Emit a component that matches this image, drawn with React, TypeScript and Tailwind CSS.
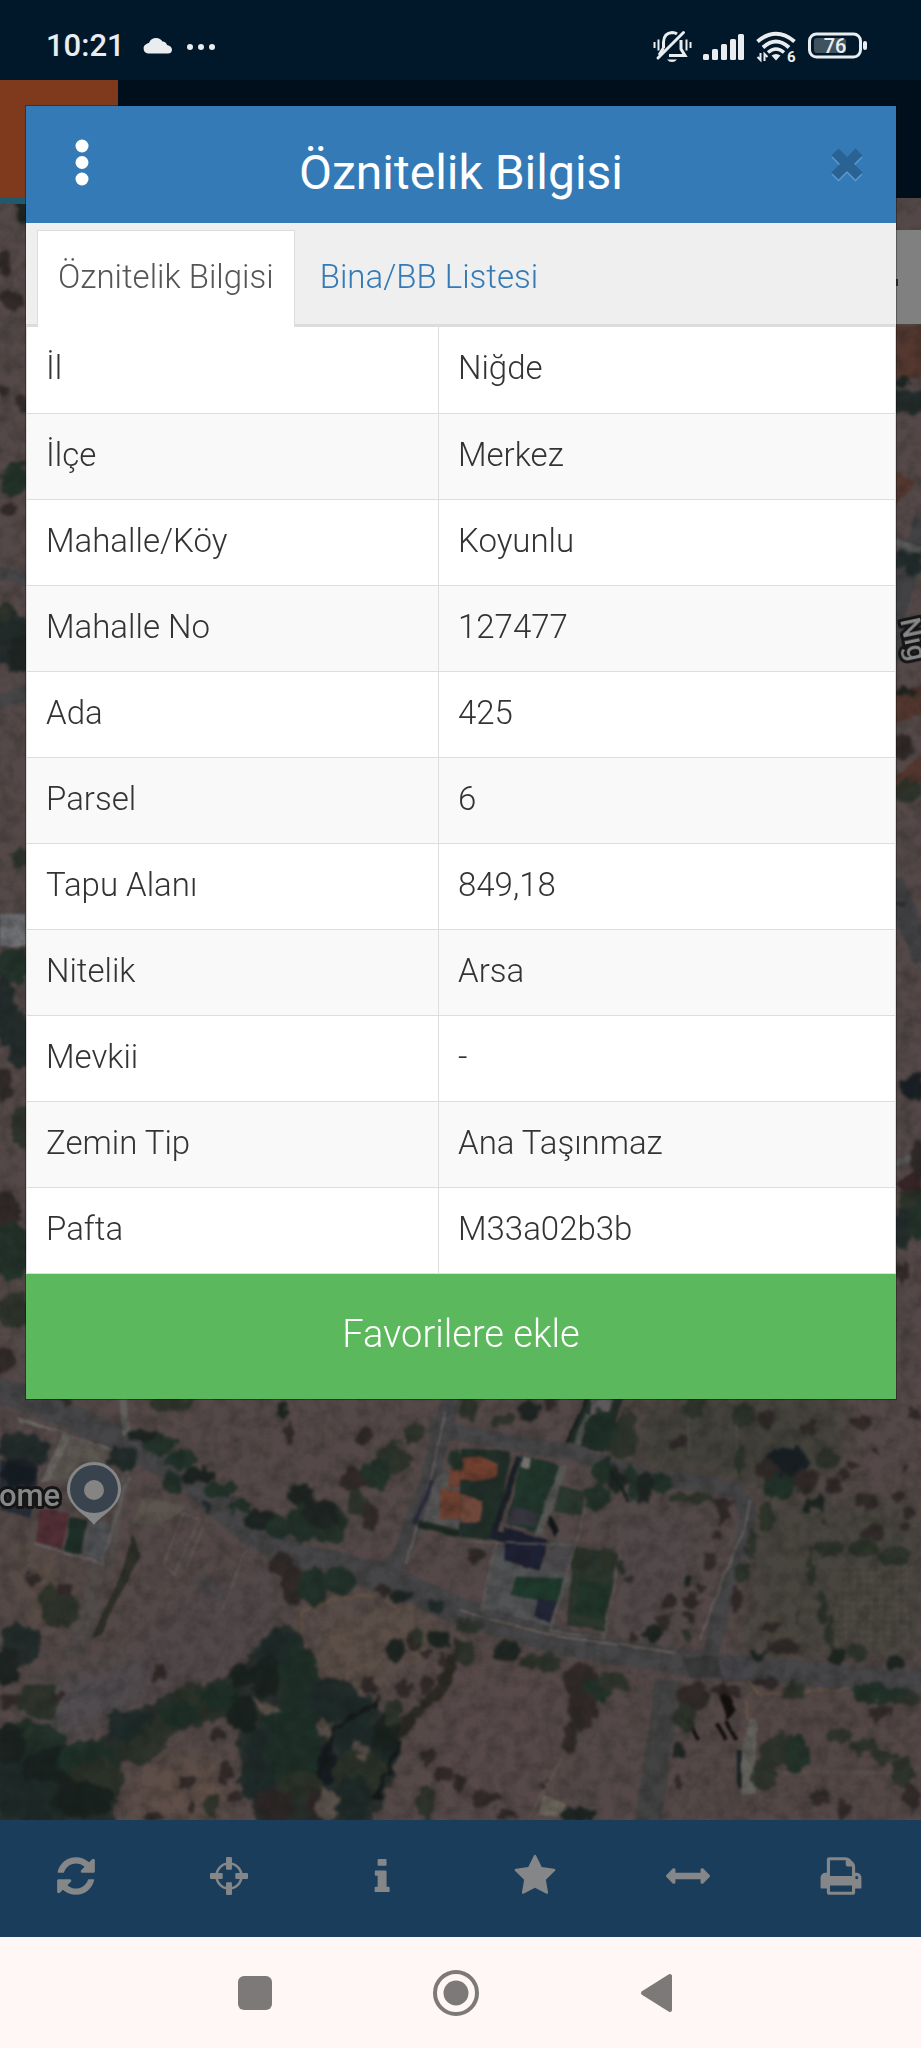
import { useState, type ReactNode } from 'react'

const attributes = [
  { label: 'İl',          value: 'Niğde'        },
  { label: 'İlçe',        value: 'Merkez'       },
  { label: 'Mahalle/Köy', value: 'Koyunlu'      },
  { label: 'Mahalle No',  value: '127477'       },
  { label: 'Ada',         value: '425'          },
  { label: 'Parsel',      value: '6'            },
  { label: 'Tapu Alanı',  value: '849,18'       },
  { label: 'Nitelik',     value: 'Arsa'         },
  { label: 'Mevkii',      value: '-'            },
  { label: 'Zemin Tip',   value: 'Ana Taşınmaz' },
  { label: 'Pafta',       value: 'M33a02b3b'    },
]

const tabs = ['Öznitelik Bilgisi', 'Bina/BB Listesi']

// Trees and shrubs: [x, y, rx, ry, tone]
type Tree = [number, number, number, number, number]
const tones = ['#19221e', '#1e3027', '#1e2a29', '#2e2726', '#2b3229', '#141c22']

const treesWest: Tree[] = [
  [510, 70, 65, 25, 4], [195, 62, 25, 15, 3], [850, 88, 16, 24, 0], [870, 165, 14, 36, 3],
  [1092, 165, 26, 28, 3], [1245, 160, 32, 28, 4], [1180, 235, 55, 45, 4], [1130, 285, 50, 42, 1],
  [1060, 300, 36, 40, 3], [1070, 370, 34, 40, 4], [1110, 410, 28, 40, 3], [900, 345, 40, 32, 0],
  [430, 165, 45, 22, 0], [480, 195, 50, 26, 1], [545, 240, 50, 25, 1], [600, 285, 50, 25, 0],
  [660, 330, 50, 24, 1], [720, 375, 40, 20, 1], [780, 415, 55, 28, 0], [840, 440, 45, 30, 1],
  [920, 430, 60, 60, 1], [985, 430, 55, 60, 1], [960, 400, 60, 40, 0], [370, 235, 42, 36, 2],
  [515, 310, 34, 34, 1], [70, 210, 75, 55, 2], [60, 280, 60, 40, 5], [845, 550, 36, 36, 3],
  [880, 620, 34, 60, 3], [940, 620, 45, 58, 1], [1010, 600, 55, 40, 1], [1150, 630, 26, 16, 3],
  [1200, 650, 30, 16, 0], [1310, 680, 24, 24, 2], [180, 690, 56, 55, 4], [150, 650, 30, 30, 4],
  [192, 632, 20, 22, 3], [60, 790, 60, 60, 2], [20, 860, 45, 55, 0], [100, 600, 18, 22, 3],
  [120, 960, 65, 55, 4], [30, 960, 28, 26, 3], [180, 955, 20, 18, 3], [475, 882, 26, 26, 3],
  [1185, 812, 28, 32, 0], [1248, 770, 25, 30, 4], [1318, 778, 30, 32, 0], [1275, 820, 12, 12, 3],
  [1240, 800, 22, 18, 3], [1330, 840, 18, 18, 3], [1210, 925, 26, 26, 3], [1278, 915, 20, 22, 3],
  [1110, 915, 26, 28, 3], [840, 830, 66, 80, 2], [800, 890, 45, 60, 0], [900, 870, 60, 75, 1],
  [725, 885, 36, 36, 0], [590, 960, 75, 55, 4], [540, 1000, 62, 40, 1], [660, 950, 60, 42, 1],
  [730, 1000, 42, 60, 0], [900, 950, 50, 60, 1], [1000, 960, 80, 62, 2], [1060, 990, 60, 50, 2],
  [870, 1040, 90, 70, 1], [800, 1100, 65, 60, 2], [880, 1130, 90, 80, 1], [770, 1200, 55, 60, 2],
  [900, 1220, 60, 50, 4], [820, 1280, 60, 50, 3], [1060, 1070, 60, 60, 2], [1110, 1110, 90, 80, 2],
  [1080, 1180, 80, 70, 4], [1060, 1260, 60, 70, 2], [1160, 1060, 36, 60, 0], [1180, 1000, 30, 40, 4],
  [980, 1150, 25, 60, 5], [940, 1270, 22, 50, 3], [400, 1040, 75, 50, 2], [350, 1020, 26, 30, 2],
  [470, 1060, 45, 40, 4], [420, 1110, 60, 40, 4], [655, 1065, 22, 22, 3], [675, 1180, 26, 28, 3],
  [560, 1208, 20, 20, 3], [710, 1252, 20, 20, 3], [630, 1275, 28, 30, 4], [575, 1280, 14, 18, 3],
  [80, 1100, 120, 75, 1], [40, 1170, 110, 80, 2], [160, 1180, 90, 80, 0], [260, 1140, 90, 60, 1],
  [290, 1200, 80, 60, 4], [100, 1260, 140, 60, 2], [250, 1260, 90, 55, 0], [30, 1090, 50, 60, 0],
  [1280, 1130, 26, 26, 3], [1330, 1180, 28, 20, 3], [1275, 1265, 32, 50, 4], [1370, 1210, 20, 24, 3],
  [460, 1312, 26, 10, 3], [1370, 240, 22, 30, 1], [620, 382, 10, 13, 2],
]

const treesEast: Tree[] = [
  [25, 85, 28, 35, 4], [205, 90, 30, 32, 0], [130, 118, 34, 20, 4], [270, 72, 22, 22, 3],
  [425, 150, 48, 60, 1], [500, 150, 30, 60, 4], [490, 200, 40, 40, 4], [655, 190, 22, 18, 3],
  [700, 80, 34, 30, 4], [850, 110, 34, 36, 4], [915, 120, 26, 30, 3], [430, 270, 34, 40, 1],
  [470, 300, 26, 38, 0], [415, 350, 40, 40, 1], [520, 310, 26, 50, 1], [555, 320, 22, 50, 0],
  [600, 310, 26, 36, 1], [700, 355, 75, 18, 4], [790, 370, 28, 20, 3], [920, 410, 28, 42, 4],
  [980, 250, 65, 50, 5], [920, 270, 36, 30, 3], [960, 320, 55, 36, 1], [1040, 300, 34, 36, 3],
  [1045, 145, 26, 24, 3], [1100, 235, 32, 38, 4], [1180, 255, 18, 16, 3], [1123, 318, 22, 24, 3],
  [1202, 126, 28, 24, 3], [1218, 364, 32, 28, 3], [1078, 372, 24, 22, 0], [1045, 375, 12, 18, 0],
  [1312, 348, 18, 18, 3], [1345, 400, 18, 18, 3], [1335, 435, 14, 14, 3], [1230, 460, 40, 24, 3],
  [1110, 505, 44, 24, 4], [1210, 505, 45, 28, 4], [1300, 530, 50, 30, 4], [1150, 280, 14, 16, 3],
  [1360, 105, 22, 18, 3], [1335, 262, 10, 12, 3], [1250, 215, 10, 10, 3], [1095, 425, 10, 10, 3],
  [50, 525, 24, 26, 3], [785, 400, 18, 30, 3], [770, 465, 14, 22, 3], [752, 545, 18, 32, 3],
  [875, 490, 18, 40, 4], [845, 580, 22, 30, 4], [830, 660, 18, 45, 3], [688, 600, 16, 14, 0],
  [722, 625, 16, 20, 3], [628, 660, 24, 24, 3], [690, 665, 22, 22, 3], [685, 708, 14, 14, 3],
  [610, 725, 22, 24, 3], [578, 762, 28, 24, 0], [524, 770, 18, 16, 3], [680, 770, 20, 18, 4],
  [512, 600, 10, 14, 3], [445, 535, 28, 34, 4], [365, 540, 30, 30, 4], [480, 560, 14, 20, 4],
  [30, 740, 50, 20, 4], [15, 820, 26, 40, 4], [140, 815, 38, 32, 0], [245, 845, 65, 24, 4],
  [360, 900, 55, 50, 3], [405, 930, 45, 40, 1], [370, 990, 45, 55, 3], [460, 905, 48, 30, 4],
  [330, 1070, 22, 45, 3], [700, 950, 50, 45, 3], [670, 1010, 30, 50, 4], [800, 930, 45, 24, 3],
  [655, 1105, 22, 28, 0], [655, 1205, 15, 22, 3], [1000, 930, 34, 30, 4], [910, 910, 45, 16, 3],
  [1220, 935, 52, 30, 1], [1310, 950, 60, 26, 1], [1260, 1000, 34, 28, 3], [1350, 955, 34, 22, 4],
  [970, 805, 55, 20, 3], [895, 825, 20, 12, 0], [1130, 825, 26, 22, 0], [1190, 820, 32, 28, 4],
  [1305, 850, 34, 20, 0], [935, 740, 26, 18, 3], [1010, 705, 9, 18, 3], [960, 1110, 60, 50, 4],
  [1010, 1120, 40, 60, 1], [915, 1180, 35, 60, 4], [1140, 1065, 40, 26, 4], [1210, 1100, 45, 22, 4],
  [1270, 1130, 45, 24, 4], [1330, 1180, 30, 45, 4], [1350, 1250, 24, 40, 3], [1080, 1255, 26, 24, 3],
  [1147, 1290, 20, 28, 3], [75, 1258, 44, 24, 3], [8, 1205, 14, 16, 3], [248, 1218, 16, 15, 3],
  [350, 1305, 60, 22, 0], [140, 1305, 28, 16, 3], [840, 240, 14, 50, 4], [1055, 560, 12, 60, 4],
  [1085, 680, 14, 50, 4], [1110, 760, 14, 50, 4],
]

const treesEdges: Tree[] = [
  [24, 210, 8, 14, 0], [4, 262, 6, 12, 3], [12, 300, 12, 9, 3], [4, 390, 6, 8, 3], [23, 404, 6, 9, 3],
  [14, 480, 14, 17, 1], [8, 511, 8, 6, 3], [12, 640, 18, 30, 2], [22, 655, 14, 18, 0], [4, 612, 9, 10, 4],
  [19, 858, 10, 9, 4], [14, 966, 18, 16, 1], [4, 1010, 12, 34, 2], [20, 1040, 12, 30, 2],
  [4, 1085, 8, 18, 3], [21, 1125, 9, 22, 4], [7, 1210, 14, 20, 3], [12, 1252, 18, 30, 1],
  [14, 1310, 16, 18, 4], [4, 1360, 12, 12, 3], [909, 402, 18, 12, 2], [903, 382, 8, 5, 0],
  [902, 560, 8, 8, 2], [914, 564, 10, 12, 2], [902, 693, 14, 4, 0], [908, 792, 14, 12, 4],
  [902, 748, 10, 14, 3], [899, 905, 6, 4, 3], [915, 1088, 14, 12, 5], [918, 1215, 14, 26, 1],
  [902, 1230, 8, 22, 2], [902, 1272, 8, 8, 3], [918, 1160, 8, 20, 3], [910, 1200, 10, 8, 4],
]

function Trees({ items }: { items: Tree[] }) {
  return (
    <g opacity="0.9">
      {items.map(([x, y, rx, ry, tone], i) => (
        <ellipse key={i} cx={x} cy={y} rx={rx} ry={ry} fill={tones[tone]} />
      ))}
    </g>
  )
}

function SatelliteMap() {
  return (
    <svg
      className="absolute inset-0 w-full h-full"
      viewBox="0 198 921 1622"
      preserveAspectRatio="xMidYMid slice"
      role="img"
      aria-label="Uydu haritası"
    >
      <defs>
        <filter id="ragged" x="-5%" y="-5%" width="110%" height="110%" colorInterpolationFilters="sRGB">
          <feTurbulence type="fractalNoise" baseFrequency="0.09" numOctaves="3" seed="4" result="n" />
          <feDisplacementMap in="SourceGraphic" in2="n" scale="14" xChannelSelector="R" yChannelSelector="G" />
          <feGaussianBlur stdDeviation="1.8" />
        </filter>
        <filter id="soft" x="-5%" y="-5%" width="110%" height="110%" colorInterpolationFilters="sRGB">
          <feTurbulence type="fractalNoise" baseFrequency="0.05" numOctaves="2" seed="9" result="n" />
          <feDisplacementMap in="SourceGraphic" in2="n" scale="4" xChannelSelector="R" yChannelSelector="G" />
          <feGaussianBlur stdDeviation="1.2" />
        </filter>
        <filter id="haze" x="-20%" y="-20%" width="140%" height="140%" colorInterpolationFilters="sRGB">
          <feGaussianBlur stdDeviation="12" />
        </filter>
        <filter id="grain" x="0" y="0" width="100%" height="100%" colorInterpolationFilters="sRGB">
          <feTurbulence type="fractalNoise" baseFrequency="0.07" numOctaves="4" seed="2" />
          <feColorMatrix values="0 0 0 0 0.08  0 0 0 0 0.09  0 0 0 0 0.08  1.6 0 0 0 -0.6" />
        </filter>
        <pattern id="rows" width="26" height="22" patternUnits="userSpaceOnUse">
          <path d="M0 11H20M13 0V16" stroke="#716a5c" strokeWidth="3" opacity="0.35" />
        </pattern>
      </defs>

      <rect y="198" width="921" height="1622" fill="#544948" />

      {/* Ground tones */}
      <g filter="url(#haze)">
        <path d="M635 1400H840V1470L810 1480H740L640 1470V1400Z" fill="#42413a" />
        <path d="M755 1500H921V1660H745Z" fill="#48453e" />
        <path d="M180 1600L280 1560L270 1650L200 1690H110Z" fill="#52484a" />
        <path d="M310 1610L420 1600L440 1650L370 1690H320Z" fill="#5c4f48" />
        <path d="M140 1760H230V1820H120Z" fill="#5f4f48" />
        <path d="M440 1660H560V1820H410Z" fill="#574949" />
        <path d="M0 1530L60 1560L90 1640L30 1620Z" fill="#5a4d46" />
        <path d="M600 1500L700 1510L680 1640H610Z" fill="#53494a" />
        <path d="M20 1690L150 1660L140 1700L60 1740Z" fill="#504c50" />
        <path d="M740 1690H921V1820H690Z" fill="#544847" />
      </g>

      {/* Roads */}
      <g filter="url(#soft)" fill="none" stroke="#464547" strokeLinejoin="round">
        <path d="M-10 1386L60 1412L127 1443L187 1477L250 1533L300 1557L383 1577L460 1611L560 1642L693 1664L921 1684" strokeWidth="26" />
        <path d="M386 1576L404 1550L428 1484L440 1438L452 1396" strokeWidth="18" />
        <path d="M428 1425L460 1433L577 1454L650 1479L700 1483L735 1490L748 1510L742 1550L720 1613L710 1660" strokeWidth="16" />
        <path d="M667 1680L660 1740L647 1825" strokeWidth="26" stroke="#444343" />
        <path d="M107 1570L120 1500L134 1450" strokeWidth="10" stroke="#554f4d" />
        <path d="M74 1660L104 1560" strokeWidth="22" stroke="#504a49" />
        <path d="M-5 572L30 580M-5 702L30 692" strokeWidth="14" />
        <path d="M890 626L925 520M894 660V600M892 880L925 960" strokeWidth="22" stroke="#424245" />
        <path d="M123 1398L126 1436" strokeWidth="7" stroke="#62605e" />
        <path d="M700 1640L722 1580L745 1528L750 1500M405 1565L430 1482L446 1410" strokeWidth="2" stroke="#67615f" />
        <path d="M460 1611L555 1636L620 1645L676 1653" strokeWidth="2" stroke="#68605b" />
      </g>

      {/* Parcels and buildings */}
      <g filter="url(#soft)">
        <g transform="translate(0 1380) scale(.3333)">
          <path d="M50 110L340 210L320 235L210 190L150 300L120 310L190 160L60 130Z" fill="#6b6763" />
          <path d="M215 170L340 215L310 270L200 300L145 300Z" fill="#5c5651" />
          <path d="M0 240L110 270V330L90 410L0 390Z" fill="#272d38" />
          <path d="M120 385L205 400L185 505L105 485Z" fill="#522f36" />
          <path d="M208 410L262 420L245 525L195 510Z" fill="#1e2f28" />
          <path d="M268 420L330 430L312 545L250 525Z" fill="#505255" />
          <path d="M103 490L305 550L385 290" fill="none" stroke="#636060" strokeWidth="7" />
          <path d="M400 460L420 530L360 640L300 765L275 770L360 590Z" fill="#2f3129" />
          <path d="M430 350L560 380L480 440L400 430Z" fill="#5c554e" />
          <path d="M490 555L550 400L600 420L520 585ZM560 560L620 420M670 690L735 510" fill="none" stroke="#605957" strokeWidth="5" />
          <path d="M575 600Q620 560 660 620T600 640Z" fill="#3f4347" opacity="0.4" />
          <path d="M905 700Q910 860 990 920M905 695Q1010 640 1120 650" fill="none" stroke="#6d5946" strokeWidth="12" opacity="0.5" />
          <path d="M1310 290L1380 230V460L1260 440Z" fill="#565555" />
          <path d="M1352 250H1400V320H1345ZM1325 330H1400V415H1315Z" fill="#714232" />
          <path d="M1255 430L1380 460" stroke="#1d2a22" strokeWidth="20" />
          <path d="M1300 300L1245 430" stroke="#2a2c3c" strokeWidth="14" />
        </g>
        <g transform="translate(460 1380) scale(.3333)">
          <path d="M0 205L150 215L110 480L0 470Z" fill="#212f29" />
          <path d="M0 235L60 228L110 250L108 295L40 305L0 300Z" fill="#714030" />
          <path d="M0 340L70 365L60 425L0 425Z" fill="#70483b" />
          <path d="M185 225L300 255L245 460L140 430Z" fill="#21362c" />
          <path d="M300 250L325 258L245 465L225 455Z" fill="#575856" />
          <path d="M190 228L215 235L210 270L185 262Z" fill="#757370" />
          <path d="M160 380L235 400L225 440L140 430Z" fill="#37363f" />
          <path d="M175 230L100 470" stroke="#1a2026" strokeWidth="18" />
          <path d="M300 320L375 335L365 405L280 395Z" fill="#2b3830" />
          <path d="M265 405L300 455L285 470L262 430Z" fill="#11171a" />
          <path d="M108 500L340 590L270 740L65 680Z" fill="#525355" />
          <path d="M135 440L262 480L240 572L130 540Z" fill="#1e2033" />
          <path d="M95 450L140 455L135 490L90 475Z" fill="#1b202c" />
          <path d="M165 590L310 595L290 670L150 645Z" fill="#1f392d" />
          <path d="M235 655L290 665L270 728L222 710Z" fill="#222536" />
          <path d="M270 480L345 490L320 580L245 575Z" fill="#4e4b4f" />
          <path d="M340 500L470 520L435 755L320 735Z" fill="#2b362d" />
          <path d="M360 600L450 615L430 720L345 700Z" fill="#21352a" />
          <path d="M375 385L350 480L270 755L430 775L480 520M0 485L330 495M110 490L65 690" fill="none" stroke="#625e5b" strokeWidth="5" />
          <path d="M375 55H490L430 215L320 190Z" fill="#242e2a" />
          <path d="M395 55H460L450 95L390 105Z" fill="#5e585b" />
          <path d="M385 100L350 195" stroke="#4e534e" strokeWidth="18" />
          <path d="M438 250L505 365M320 190L380 55" stroke="#171d1c" strokeWidth="8" />
          <path d="M665 830H790L800 890L690 895Z" fill="#383938" />
          <path d="M775 835H860V895H790Z" fill="#48464b" />
          <path d="M785 915L820 990L805 1010L785 950ZM685 1020L715 1080M770 1030L800 1080M800 1025L830 1080" fill="#15100f" stroke="#15100f" strokeWidth="12" />
          <path d="M865 1020H890L885 1240L845 1245V1110Z" fill="#64625d" />
          <path d="M838 1110V1225" stroke="#1d2426" strokeWidth="14" />
          <path d="M865 905L900 945L1165 925M860 960V1020" fill="none" stroke="#6e5a46" strokeWidth="9" opacity="0.6" />
          <path d="M250 1245L315 1270L295 1310L235 1300Z" fill="#6b665c" />
          <path d="M330 1090L205 1315" stroke="#5f5751" strokeWidth="7" />
          <path d="M1140 560H1360V800H1120Z" fill="url(#rows)" />
          <path d="M900 1180Q1150 1170 1290 1180" fill="none" stroke="#66605a" strokeWidth="14" opacity="0.3" />
          <path d="M530 240V60M690 230L680 60M830 60V290" stroke="#514e46" strokeWidth="5" />
        </g>
        <path d="M0 914H26V946H0Z" fill="#6e6f73" />
        <path d="M890 326H925V378H890ZM890 468L916 482L892 508ZM892 692L925 684V714L892 724ZM892 780L925 752V778L892 800Z" fill="#543830" />
        <path d="M896 1184L921 1166V1190L912 1200Z" fill="#362527" />
        <path d="M892 540L921 552M892 1164L921 1156" stroke="#5a5b5b" strokeWidth="7" />
      </g>

      <g filter="url(#ragged)">
        {/* Woodland canopy along the stream */}
        <path d="M0 1725L40 1742L90 1748L120 1725L150 1705L175 1690L235 1675L262 1640L285 1622L305 1640L320 1680L372 1700L392 1735L398 1762L372 1825H258L240 1760L232 1715L165 1735L120 1765L115 1825H0Z" fill="#1e2925" opacity="0.8" />
        <path d="M395 1735L440 1690L462 1640" fill="none" stroke="#2c2a23" strokeWidth="12" />
        <g transform="translate(0 1380) scale(.3333)"><Trees items={treesWest} /></g>
        <g transform="translate(460 1380) scale(.3333)"><Trees items={treesEast} /></g>
        <Trees items={treesEdges} />
        <path d="M318 1780L334 1730L380 1700M376 1800L400 1740" fill="none" stroke="#14181a" strokeWidth="5" />
        <path d="M318 1718L332 1722L328 1742L318 1734ZM350 1738L368 1750L365 1762L354 1752ZM250 1695L282 1710L262 1716ZM322 1785L342 1800L330 1822L316 1815Z" fill="#5a504a" />
      </g>
      <rect y="198" width="921" height="1622" filter="url(#grain)" opacity="0.35" />

      {/* Labels and the place pin */}
      <g fontFamily="Roboto, sans-serif" fontWeight="500" fill="#858687" stroke="#151515" strokeWidth="6" strokeLinejoin="round" paintOrder="stroke">
        <text x="-1" y="1506" fontSize="31">ome</text>
        <text transform="translate(900 620) rotate(78)" fontSize="28">Niğ</text>
      </g>
      <path d="M94 1525C88 1516 67 1507 67 1489A27 27 0 0 1 121 1489C121 1507 100 1516 94 1525Z" fill="#858687" />
      <circle cx="94" cy="1489" r="24" fill="#39434d" />
      <circle cx="94" cy="1490" r="10" fill="#858483" />

      {/* Layer box at the edge of the map */}
      <rect x="740" y="230" width="190" height="94" fill="#808080" />
      <rect x="893" y="279" width="5" height="7" fill="#2c2c2c" />
    </svg>
  )
}

function StatusBar() {
  return (
    <div className="h-20 pt-3 pl-[46px] pr-[54px] flex items-center justify-between bg-[#00182a] text-[#e9edf0]">
      <div className="flex items-center gap-[18px]">
        <span className="text-[31px] leading-9 font-medium">10:21</span>
        <svg width="72" height="20" viewBox="0 0 72 20" fill="currentColor" aria-hidden="true">
          <path d="M5 17.500A5 5 0 0 1 3.500 8Q4.500 7 6 7A7.500 7.500 0 0 1 19.500 5.500Q23 5.500 24 9Q29 10 29 14Q28.500 17.500 25 17.500Z" />
          <circle cx="47" cy="11" r="3" />
          <circle cx="58" cy="11" r="3" />
          <circle cx="69" cy="11" r="3" />
        </svg>
      </div>
      <div className="flex items-center gap-[11px]">
        <svg width="39" height="34" viewBox="0 0 39 34" fill="none" stroke="currentColor" strokeWidth="3" aria-hidden="true">
          <path d="M10.500 19V13Q11 4 19 3.500Q22 3.500 24 5M28 11V20L32 26.500H16" />
          <path d="M5 29L30.500 3.500" strokeLinecap="round" />
          <path d="M6 26L10.500 19" />
          <path d="M14 30.500H24Q22 33 19 33T14 30.500Z" fill="currentColor" stroke="none" />
          <path d="M1.500 13V19M5.500 10.500V21.500M33.500 10.500V21.500M37.500 13V19" strokeWidth="2" />
        </svg>
        <svg width="42" height="34" viewBox="0 0 42 34" fill="currentColor" aria-hidden="true">
          <rect x="0" y="25" width="6" height="6" rx="1.500" />
          <rect x="9" y="20" width="6" height="11" rx="1.500" />
          <rect x="18" y="15" width="6" height="16" rx="1.500" />
          <rect x="27" y="10" width="6" height="21" rx="1.500" />
          <rect x="35" y="5" width="6" height="26" rx="1.500" />
        </svg>
        <svg className="overflow-visible" width="41" height="34" viewBox="0 0 41 34" fill="none" stroke="currentColor" strokeWidth="4" aria-hidden="true">
          <path d="M1.500 12.500Q20 -3 38.500 12.500" />
          <path d="M7 18.500Q20 6.500 33 18.500" />
          <path d="M12 23.500Q20 16.500 28 23.500" strokeWidth="3.500" />
          <path d="M15.500 26.500Q20 23.500 24.500 26.500L20 31.500Z" fill="currentColor" stroke="none" />
          <path d="M4.500 24V31L1.500 28M8.500 32V25L11.500 28" strokeWidth="2" />
          <text x="31" y="33" fontSize="15" fontWeight="700" fill="currentColor" stroke="none">6</text>
        </svg>
        <svg width="59" height="34" viewBox="0 0 59 34" fill="none" aria-hidden="true">
          <rect x="1.500" y="5" width="51" height="23" rx="7" stroke="currentColor" strokeWidth="3" />
          <rect x="6" y="9" width="32" height="15" rx="3" fill="#41525f" />
          <rect x="55" y="12" width="4" height="9" rx="2" fill="currentColor" />
          <text x="27" y="24" fontSize="20" fontWeight="500" textAnchor="middle" fill="currentColor">76</text>
        </svg>
      </div>
    </div>
  )
}

const tools: { label: string; icon: ReactNode }[] = [
  {
    label: 'Yenile',
    icon: <path d="M1639 1056q0 5-1 7-64 268-268 434.500t-478 166.500q-146 0-282.500-55t-243.500-157l-129 129q-19 19-45 19t-45-19-19-45v-448q0-26 19-45t45-19h448q26 0 45 19t19 45-19 45l-137 137q71 66 161 102t187 36q134 0 250-65t186-179q11-17 53-117 8-23 30-23h192q13 0 22.500 9.500t9.500 22.500zm25-800v448q0 26-19 45t-45 19h-448q-26 0-45-19t-19-45 19-45l138-138q-148-137-349-137-134 0-250 65t-186 179q-11 17-53 117-8 23-30 23h-199q-13 0-22.500-9.500t-9.500-22.500v-7q65-268 270-434.500t480-166.500q146 0 284 55.500t245 156.500l130-129q19-19 45-19t45 19 19 45z" />,
  },
  {
    label: 'Konumum',
    icon: (
      <>
        <circle cx="896" cy="896" r="590" fill="none" stroke="currentColor" strokeWidth="120" />
        <rect x="756" y="0" width="280" height="600" rx="50" />
        <rect x="756" y="1192" width="280" height="600" rx="50" />
        <rect x="0" y="756" width="600" height="280" rx="50" />
        <rect x="1192" y="756" width="600" height="280" rx="50" />
      </>
    ),
  },
  {
    label: 'Bilgi',
    icon: (
      <path d="M736 96H1064Q1112 96 1112 144V370Q1112 418 1064 418H736Q688 418 688 370V144Q688 96 736 96ZM604 640H1064Q1112 640 1112 690V1400H1200Q1256 1400 1256 1450V1600Q1256 1656 1200 1656H600Q548 1656 548 1600V1450Q548 1400 600 1400H690V890H604Q556 890 556 840V690Q556 640 604 640Z" />
    ),
  },
  {
    label: 'Favoriler',
    icon: <path d="M1728 647q0 22-26 48l-363 354 86 500q1 7 1 20 0 21-10.500 35.500t-30.500 14.500q-19 0-40-12l-449-236-449 236q-22 12-40 12-21 0-31.500-14.500t-10.500-35.500q0-6 2-20l86-500-364-354q-25-27-25-48 0-37 56-46l502-73 225-455q19-41 49-41t49 41l225 455 502 73q56 9 56 46z" />,
  },
  {
    label: 'Ölçüm',
    icon: <path d="M1792 896q0 26-19 45l-256 256q-19 19-45 19t-45-19-19-45v-128h-1024v128q0 26-19 45t-45 19-45-19l-256-256q-19-19-19-45t19-45l256-256q19-19 45-19t45 19 19 45v128h1024v-128q0-26 19-45t45-19 45 19l256 256q19 19 19 45z" />,
  },
  {
    label: 'Yazdır',
    icon: <path d="M448 1536h896v-256h-896v256zm0-640h896v-384h-160q-40 0-68-28t-28-68v-160h-640v640zm1152 64q0-26-19-45t-45-19-45 19-19 45 19 45 45 19 45-19 19-45zm128 0v416q0 13-9.500 22.500t-22.500 9.500h-224v160q0 40-28 68t-68 28h-960q-40 0-68-28t-28-68v-160h-224q-13 0-22.500-9.500t-9.500-22.500v-416q0-79 56.500-135.500t135.500-56.500h64v-544q0-40 28-68t68-28h672q40 0 88 20t76 48l152 152q28 28 48 76t20 88v256h64q79 0 135.500 56.500t56.500 135.500z" />,
  },
]

function Toolbar() {
  return (
    <nav className="h-[117px] pb-[5px] pr-1 grid grid-cols-6 bg-[#1b3d5c] text-[#848688]">
      {tools.map((tool) => (
        <button key={tool.label} type="button" aria-label={tool.label} className="flex items-center justify-center">
          <svg
            className={tool.label === 'Konumum' || tool.label === 'Bilgi' ? 'w-[38px] h-[38px]' : 'w-11 h-11'}
            viewBox="0 0 1792 1792"
            fill="currentColor"
            aria-hidden="true"
          >
            {tool.icon}
          </svg>
        </button>
      ))}
    </nav>
  )
}

function SystemNav() {
  return (
    <div className="h-[111px] pr-[10px] flex items-center justify-center gap-[153px] bg-[#fff7f6] text-[#7c7978]">
      <button type="button" aria-label="Son uygulamalar">
        <svg width="48" height="48" viewBox="0 0 48 48" aria-hidden="true">
          <rect x="7" y="7" width="34" height="34" rx="6" fill="currentColor" />
        </svg>
      </button>
      <button type="button" aria-label="Ana ekran">
        <svg width="48" height="48" viewBox="0 0 48 48" aria-hidden="true">
          <circle cx="24" cy="24" r="21" fill="none" stroke="currentColor" strokeWidth="4" />
          <circle cx="24" cy="24" r="12.500" fill="currentColor" />
        </svg>
      </button>
      <button type="button" aria-label="Geri">
        <svg width="48" height="48" viewBox="0 0 48 48" aria-hidden="true">
          <path d="M10 24L37 7V41Z" fill="currentColor" stroke="currentColor" strokeWidth="4" strokeLinejoin="round" />
        </svg>
      </button>
    </div>
  )
}

function ParcelDialog() {
  const [active, setActive] = useState(0)

  return (
    <div
      role="dialog"
      aria-labelledby="dialog-title"
      className="absolute top-[106px] inset-x-[26px] right-[25px] bg-white shadow-[0_0_0_1px_rgba(0,0,0,0.3)]"
    >
      <header className="h-[117px] px-8 flex items-center justify-between bg-[#337ab7] text-white">
        <button type="button" aria-label="Menü" className="w-12 h-12 mb-1">
          <svg width="48" height="48" viewBox="0 0 48 48" fill="currentColor" aria-hidden="true">
            <circle cx="24" cy="7" r="6.500" />
            <circle cx="24" cy="23.500" r="6.500" />
            <circle cx="24" cy="40" r="6.500" />
          </svg>
        </button>
        <h1 id="dialog-title" className="pt-4 text-5xl leading-none font-normal">Öznitelik Bilgisi</h1>
        <button type="button" aria-label="Kapat" className="w-12 h-12 flex items-center justify-end">
          <svg width="34" height="38" viewBox="1 0 34 38" aria-hidden="true">
            <path d="M6 8L30 32M30 8L6 32" stroke="#5b9bd0" strokeWidth="10" />
            <path d="M6 6L30 30M30 6L6 30" stroke="#296293" strokeWidth="10" />
          </svg>
        </button>
      </header>

      <div role="tablist" className="h-[104px] pt-[7px] pl-[11px] flex gap-1 bg-[#efefef] border-b-[3px] border-[#dcdcdc]">
        {tabs.map((tab, i) => (
          <button
            key={tab}
            type="button"
            role="tab"
            aria-selected={active === i}
            onClick={() => setActive(i)}
            className={
              active === i
                ? 'h-[97px] px-5 pb-1 border border-b-0 border-[#dddddd] bg-white text-[33px] font-light text-[#555555]'
                : 'h-[97px] px-5 pb-1 border border-b-0 border-transparent text-[33px] font-light text-[#337ab7]'
            }
          >
            {tab}
          </button>
        ))}
      </div>

      <table className="w-full border-collapse border-x border-[#dddddd]">
        <tbody>
          {attributes.map((row) => (
            <tr key={row.label} className="h-[86px] border-b border-[#dddddd] even:bg-[#f9f9f9]">
              <th scope="row" className="w-[412px] px-[19px] pb-1 text-left text-[33px] leading-none font-light text-[#333333] border-r border-[#dddddd]">
                {row.label}
              </th>
              <td className="px-[19px] pb-1 text-[33px] leading-none font-light text-[#333333]">{row.value}</td>
            </tr>
          ))}
        </tbody>
      </table>

      <button type="button" className="w-full h-[125px] pb-1 bg-[#5cb85c] text-[38px] font-light text-white">
        Favorilere ekle
      </button>
    </div>
  )
}

export default function App() {
  return (
    <div className="relative min-h-screen flex flex-col font-['Roboto',sans-serif]">
      <StatusBar />
      <div className="h-[118px] flex bg-[#000f1b]">
        <div className="w-[118px] bg-[#7f391c]" />
      </div>
      <main className="relative flex-1 overflow-hidden bg-[#514646]">
        <SatelliteMap />
        <div className="relative w-[118px] h-[6px] bg-[#22586c]" />
      </main>
      <Toolbar />
      <SystemNav />
      <ParcelDialog />
    </div>
  )
}
